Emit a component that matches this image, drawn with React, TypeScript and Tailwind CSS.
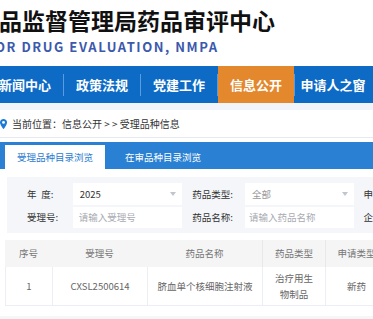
import React from 'react';

const FONT = { fontFamily: '"Noto Sans CJK SC", "Noto Sans", sans-serif' };

const NAV = ['新闻中心', '政策法规', '党建工作', '信息公开', '申请人之窗'];

function Caret() {
  return (
    <svg width="6" height="4" viewBox="0 0 6 4" className="shrink-0">
      <path d="M0 0 L6 0 L3 4 Z" fill="#c0c4cc" />
    </svg>
  );
}

function Pin() {
  return (
    <svg width="7" height="10" viewBox="0 0 7 10" className="shrink-0">
      <path d="M3.5 0 C1.5 0 0 1.5 0 3.4 C0 5.8 3.5 10 3.5 10 C3.5 10 7 5.8 7 3.4 C7 1.5 5.5 0 3.5 0 Z" fill="#1d7ad6" />
      <circle cx="3.5" cy="3.4" r="1.4" fill="#fff" />
    </svg>
  );
}

export default function App() {
  return (
    <div className="w-[373px] h-[319px] overflow-hidden bg-white" style={FONT}>
      {/* Header */}
      <div className="h-[66px] pt-[7px] whitespace-nowrap">
        <div className="text-[23px] leading-[27px] font-bold text-[#111] ml-[-1px]">品监督管理局药品审评中心</div>
        <div className="mt-[5px] ml-[-5px] text-[13px] leading-[16px] font-semibold tracking-[1.55px] text-[#3c59ad]">
          OR DRUG EVALUATION, NMPA
        </div>
      </div>

      {/* Nav */}
      <div className="h-[37px] bg-[#0d6bc6] flex items-stretch ml-[-13px] whitespace-nowrap">
        {NAV.map((n, i) => (
          <React.Fragment key={n}>
            {i > 0 && (
              <div className="flex items-center">
                <div className="w-px h-[22px] bg-[#5b9be0]" />
              </div>
            )}
            <div
              className={
                'w-[76px] shrink-0 flex items-center justify-center text-[13px] font-bold text-white ' +
                (n === '信息公开' ? 'bg-[#e3882c]' : '')
              }
            >
              {n}
            </div>
          </React.Fragment>
        ))}
      </div>

      <div className="h-[7px] bg-[#f1f5fa]" />

      {/* Breadcrumb */}
      <div className="h-[28px] flex items-center gap-[5px] border-b border-[#e6e9ee] text-[10px] text-[#333] whitespace-nowrap">
        <Pin />
        <span>当前位置：信息公开 &gt; &gt; 受理品种信息</span>
      </div>

      {/* Tabs */}
      <div className="mt-[4px] h-[27px] bg-[#2a81d3] flex items-end pl-[5px] whitespace-nowrap">
        <div className="w-[100px] h-[24px] bg-white flex items-center justify-center text-[9.5px] text-[#2a7bcf]">
          受理品种目录浏览
        </div>
        <div className="h-[24px] ml-[20px] flex items-center text-[9.5px] text-white">在审品种目录浏览</div>
      </div>

      {/* Filter panel */}
      <div className="mt-[8px] ml-[7px] h-[56px] bg-[#f4f6f9] pt-[6px] flex flex-col gap-[2px] text-[9.5px] whitespace-nowrap">
        <div className="flex items-center h-[22px]">
          <div className="w-[66px] pl-[20px] text-[#333]">年&#8194;度:</div>
          <div className="w-[110px] h-full bg-white flex items-center justify-between pl-[7px] pr-[6px] text-[#333]">
            <span>2025</span>
            <Caret />
          </div>
          <div className="w-[63px] pl-[10px] text-[#333]">药品类型:</div>
          <div className="w-[110px] h-full bg-white flex items-center justify-between pl-[7px] pr-[6px] text-[#999]">
            <span>全部</span>
            <Caret />
          </div>
          <div className="pl-[9px] text-[#333]">申</div>
        </div>
        <div className="flex items-center h-[21px]">
          <div className="w-[66px] pl-[20px] text-[#333]">受理号:</div>
          <div className="w-[110px] h-full bg-white flex items-center pl-[6px] text-[#a8abb2]">请输入受理号</div>
          <div className="w-[63px] pl-[10px] text-[#333]">药品名称:</div>
          <div className="w-[110px] h-full bg-white flex items-center pl-[4px] text-[#a8abb2]">请输入药品名称</div>
          <div className="pl-[9px] text-[#333]">企</div>
        </div>
      </div>

      {/* Table */}
      <div className="mt-[7px] ml-[5px] w-[400px] text-[9.5px] whitespace-nowrap border-b border-[#ebeef5]">
        <div className="h-[27px] bg-[#f5f5f5] flex text-[#777]">
          <div className="w-[47px] flex items-center justify-center">序号</div>
          <div className="w-[95px] flex items-center justify-center">受理号</div>
          <div className="w-[115px] flex items-center justify-center">药品名称</div>
          <div className="w-[63px] flex items-center justify-center border-l border-[#e8e8e8]">药品类型</div>
          <div className="w-[62px] flex items-center justify-center border-l border-[#e8e8e8]">申请类型</div>
        </div>
        <div className="h-[38px] flex text-[#666] border-l border-[#ebeef5]">
          <div className="w-[46px] flex items-center justify-center">1</div>
          <div className="w-[95px] flex items-center justify-center border-l border-[#ebeef5]">CXSL2500614</div>
          <div className="w-[115px] flex items-center justify-center border-l border-[#ebeef5]">脐血单个核细胞注射液</div>
          <div className="w-[63px] flex flex-col items-center justify-center leading-[16px] border-l border-[#ebeef5]">
            <span>治疗用生</span>
            <span>物制品</span>
          </div>
          <div className="w-[62px] flex items-center justify-center border-l border-[#ebeef5]">新药</div>
        </div>
      </div>
      <div className="mt-[10px] h-[10px] bg-[#f5f6f8]" />
    </div>
  );
}
